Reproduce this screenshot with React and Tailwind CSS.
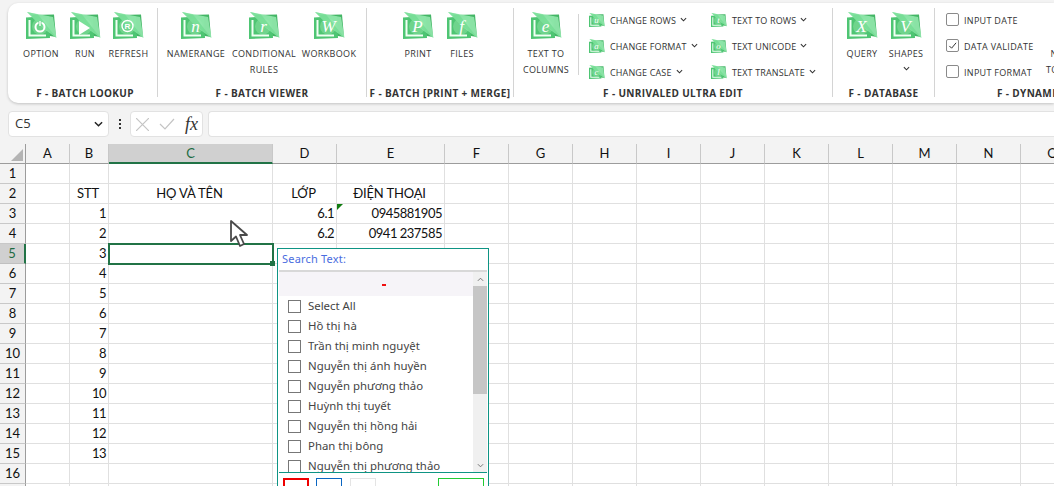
import React from "react";

const ui = { fontFamily: '"Open Sans","Noto Sans",sans-serif' };

function Glyph({ g }) {
  if (g === "power") return <g><circle cx="14" cy="15" r="4.500" fill="none" stroke="#fff" strokeWidth="2" /><path d="M14 9v5" stroke="#6fd48c" strokeWidth="3" /><path d="M14 9v5" stroke="#fff" strokeWidth="1.400" /></g>;
  if (g === "play") return <path d="M9 9l11 7-11 7z" fill="#fff" />;
  if (g === "R") return <g><circle cx="14.500" cy="14" r="5.500" fill="none" stroke="#fff" strokeWidth="1.400" /><text x="14.500" y="17" fontSize="8" fontWeight="700" fill="#fff" textAnchor="middle" fontFamily="Liberation Sans">R</text></g>;
  return <text x="14.500" y="20" fontSize="17" fontStyle="italic" fontFamily="Liberation Serif" fill="#fff" textAnchor="middle">{g}</text>;
}

function BigIcon({ g, small }) {
  return (
    <svg viewBox="0 0 31 27" width={small ? 16 : 31} height={small ? 14 : 27} className="block">
      <path d="M6 3L28 2.500L30 25L12 22z" fill="#43b565" />
      <path d="M0 5.500L23 4L24 26L0 27z" fill="#4ec573" />
      <circle cx="14" cy="14.500" r="8" fill="#6fd48c" />
      <path d="M3.500 8v15.500H20" fill="none" stroke="#f0fff4" strokeWidth="2" />
      <path d="M1 0L27 5L30.500 26L17 16z" fill="#96eab0" opacity=".85" />
      <path d="M1 0L12 2.500L30.500 26L15 14z" fill="#6fdc90" opacity=".7" />
      <Glyph g={g} />
    </svg>
  );
}

function Chevron({ className = "" }) {
  return (
    <svg viewBox="0 0 8 5" width="7" height="5" className={className}>
      <path d="M1 1l3 3 3-3" fill="none" stroke="#333" strokeWidth="1.200" />
    </svg>
  );
}

function Big({ g, w, lines, chevron }) {
  return (
    <div className="flex shrink-0 flex-col items-center" style={{ width: w }}>
      <BigIcon g={g} />
      <div className="mt-[7px] flex flex-col items-center whitespace-nowrap text-[9px] leading-[16px] tracking-[0.35px] text-[#333]">
        {lines.map((l) => <span key={l}>{l}</span>)}
        {chevron && <Chevron className="mt-[4px]" />}
      </div>
    </div>
  );
}

function Small({ g, label }) {
  return (
    <div className="flex h-[26px] items-center whitespace-nowrap text-[9px] tracking-[0.15px] text-[#333]">
      <span className="-mt-[3px] mr-[5px]"><BigIcon g={g} small /></span>
      <span>{label}</span>
      <Chevron className="ml-[4px] -mt-[3px]" />
    </div>
  );
}

function Check({ label, checked }) {
  return (
    <div className="flex h-[26px] items-center whitespace-nowrap text-[9px] tracking-[0.3px] text-[#333]">
      <span className="-mt-[3px] mr-[5px] flex h-[13px] w-[13px] items-center justify-center rounded-[2px] border border-[#8a8a8a] bg-white">
        {checked && <svg viewBox="0 0 10 10" width="9" height="9"><path d="M1.500 5.500l2.500 2.500 5-6" fill="none" stroke="#333" strokeWidth="1.100" /></svg>}
      </span>
      <span>{label}</span>
    </div>
  );
}

function Group({ title, width, pl = 0, border = true, titleClass = "justify-center", children }) {
  return (
    <div className={"flex h-[89px] shrink-0 flex-col " + (border ? "border-r border-[#d4d4d4]" : "")} style={{ width }}>
      <div className="flex h-[81px] shrink-0 overflow-hidden pt-[4px]" style={{ paddingLeft: pl }}>{children}</div>
      <div className={"flex h-[9px] shrink-0 items-center whitespace-nowrap text-[10px] font-bold tracking-[0.35px] text-[#333] " + titleClass}>{title}</div>
    </div>
  );
}

function Ribbon() {
  return (
    <div className="ml-2 flex h-[100px] overflow-hidden rounded-l-[10px] bg-white pt-[5px] shadow-[0_1px_3px_rgba(0,0,0,0.2)]">
      <Group title="F - BATCH LOOKUP" width={150} pl={11} titleClass="justify-center pl-[5px]">
        <Big g="power" w={44} lines={["OPTION"]} />
        <Big g="play" w={44} lines={["RUN"]} />
        <Big g="R" w={43} lines={["REFRESH"]} />
      </Group>
      <Group title="F - BATCH VIEWER" width={209} pl={3}>
        <Big g="n" w={70} lines={["NAMERANGE"]} />
        <Big g="r" w={66} lines={["CONDITIONAL", "RULES"]} />
        <Big g="W" w={64} lines={["WORKBOOK"]} />
      </Group>
      <Group title="F - BATCH [PRINT + MERGE]" width={147} pl={29}>
        <Big g="P" w={44} lines={["PRINT"]} />
        <Big g="f" w={44} lines={["FILES"]} />
      </Group>
      <Group title="F - UNRIVALED ULTRA EDIT" width={319}>
        <div className="w-[65px] shrink-0">
          <div className="relative">
            <Big g="e" w={64} lines={["TEXT TO", "COLUMNS"]} />
            <span className="absolute right-0 top-[2px] h-[61px] w-[1px] bg-[#d4d4d4]" />
          </div>
        </div>
        <div className="-mt-[4px] w-[132px] shrink-0 pl-[10px]">
          <Small g="u" label="CHANGE ROWS" />
          <Small g="a" label="CHANGE FORMAT" />
          <Small g="c" label="CHANGE CASE" />
        </div>
        <div className="-mt-[4px] shrink-0">
          <Small g="t" label="TEXT TO ROWS" />
          <Small g="o" label="TEXT UNICODE" />
          <Small g="l" label="TEXT TRANSLATE" />
        </div>
      </Group>
      <Group title="F - DATABASE" width={102} pl={7}>
        <Big g="X" w={44} lines={["QUERY"]} />
        <Big g="V" w={44} lines={["SHAPES"]} chevron />
      </Group>
      <Group title="F - DYNAMIC ARRAY" width={170} pl={11} border={false} titleClass="pl-[62px]">
        <div className="-mt-[4px] w-[100px] shrink-0">
          <Check label="INPUT DATE" />
          <Check label="DATA VALIDATE" checked />
          <Check label="INPUT FORMAT" />
        </div>
        <div className="mt-[34px] flex flex-col items-center text-[9px] leading-[16px] tracking-[0.35px] text-[#333]">
          <span>NEW</span>
          <span>TOOLS</span>
        </div>
      </Group>
    </div>
  );
}

function FormulaBar() {
  return (
    <div className="mt-[8px] flex h-[26px] pl-2 text-[#333]">
      <div className="flex w-[101px] items-center justify-between rounded-[4px] border border-[#e2e2e2] bg-white pl-[6px] pr-[5px] text-[13px]">
        <span>C5</span>
        <svg viewBox="0 0 10 6" width="9" height="6"><path d="M1 1l4 4 4-4" fill="none" stroke="#222" strokeWidth="1.600" /></svg>
      </div>
      <div className="flex w-[21px] flex-col items-center justify-center gap-[2px]">
        <span className="h-[2px] w-[2px] bg-[#333]" /><span className="h-[2px] w-[2px] bg-[#333]" /><span className="h-[2px] w-[2px] bg-[#333]" />
      </div>
      <div className="flex w-[73px] items-center gap-[10px] rounded-[4px] border border-[#e2e2e2] bg-white pl-[5px]">
        <svg viewBox="0 0 13 13" width="13" height="13"><path d="M0 0l13 13M13 0L0 13" stroke="#c4c4c4" strokeWidth="1.200" /></svg>
        <svg viewBox="0 0 16 12" width="16" height="12"><path d="M1 6l5 5L15 1" fill="none" stroke="#c4c4c4" strokeWidth="1.200" /></svg>
        <span className="text-[18px] italic leading-none text-[#333]" style={{ fontFamily: '"Liberation Serif",serif' }}>fx</span>
      </div>
      <div className="ml-[5px] flex-1 rounded-l-[4px] border border-r-0 border-[#e2e2e2] bg-white" />
    </div>
  );
}

const COLS = ["A", "B", "C", "D", "E", "F", "G", "H", "I", "J", "K", "L", "M", "N", "O"];
const DATA = {
  2: { B: "STT", C: "HỌ VÀ TÊN", D: "LỚP", E: "ĐIỆN THOẠI" },
  3: { D: "6.1", E: "0945881905" },
  4: { D: "6.2", E: "0941 237585" },
};
for (let r = 3; r <= 15; r++) DATA[r] = { ...(DATA[r] || {}), B: String(r - 2) };

function Sheet() {
  const rows = Array.from({ length: 17 }, (_, i) => i + 1);
  return (
    <div className="relative mt-[7px]">
      <div
        className="grid auto-rows-[20px] grid-cols-[26px_44px_39px_164px_64px_108px_repeat(10,64px)] bg-white text-[13px] text-[#111]"
        style={{ fontFamily: 'Lato,"Noto Sans",sans-serif' }}
      >
        <div className="relative border-b border-r border-[#9c9c9c] bg-[#f3f3f3]">
          <svg viewBox="0 0 12 12" width="12" height="12" className="absolute bottom-[2px] right-[2px]"><path d="M12 0v12H0z" fill="#b4b4b4" /></svg>
        </div>
        {COLS.map((c) => (
          <div key={c} className={"flex items-center justify-center border-r border-[#c8c8c8] pt-[1px] " + (c === "C" ? "border-b-2 border-b-[#217346] bg-[#d0d0d0] text-[#1d6b42]" : "border-b border-b-[#9c9c9c] bg-[#f3f3f3]")}>{c}</div>
        ))}
        {rows.map((r) => (
          <React.Fragment key={r}>
            <div className={"flex items-center justify-center border-b border-r pt-[1px] " + (r === 5 ? "border-b-[#c0c0c0] border-r-2 border-r-[#217346] bg-[#d0d0d0] text-[#1d6b42]" : "border-b-[#c8c8c8] border-r-[#9c9c9c] bg-[#f3f3f3]")}>{r}</div>
            {COLS.map((c) => {
              const v = (DATA[r] || {})[c];
              const center = r === 2;
              return (
                <div key={c} className={"relative flex items-center whitespace-nowrap border-b border-r border-[#e0e0e0] pr-[2px] pt-[1px] " + (center ? "justify-center tracking-[-0.15px]" : "justify-end tracking-[-0.5px]")}>
                  {v}
                  {r === 3 && c === "E" && <span className="absolute left-0 top-0 h-0 w-0 border-r-[6px] border-t-[6px] border-r-transparent border-t-[#107c10]" />}
                  {r === 5 && c === "C" && (
                    <span className="absolute -bottom-[2px] -left-[1px] -right-[2px] -top-[1px] z-10 border-2 border-[#217346]">
                      <span className="absolute -bottom-[3px] -right-[3px] h-[5px] w-[5px] bg-[#217346]" />
                    </span>
                  )}
                </div>
              );
            })}
          </React.Fragment>
        ))}
      </div>
      <Popup />
      <svg viewBox="0 0 18 28" width="18" height="28" className="absolute left-[230px] top-[76px] z-30">
        <path d="M1 1v20l5-4.500 4 9.500 4-2-4-9h7z" fill="#fff" stroke="#4a4a4a" strokeWidth="1.800" strokeLinejoin="round" />
      </svg>
    </div>
  );
}

const NAMES = ["Select All", "Hồ thị hà", "Trần thị minh nguyệt", "Nguyễn thị ánh huyền", "Nguyễn phương thảo", "Huỳnh thị tuyết", "Nguyễn thị hồng hải", "Phan thị bông", "Nguyễn thị phương thảo"];

function Popup() {
  return (
    <div className="absolute left-[277px] top-[104px] z-20 flex h-[241px] w-[212px] flex-col border border-[#0e9484] bg-white px-[1px] text-[11.400px] text-[#444]" style={{ fontFamily: '"Noto Sans",sans-serif' }}>
      <div className="flex h-[23px] shrink-0 items-center border-b-2 border-[#d8d8d8] pl-[3px] text-[11px] tracking-[0.2px] text-[#4a6ce0]">Search Text:</div>
      <div className="flex min-h-0 flex-1">
        <div className="min-w-0 flex-1 overflow-hidden">
          <div className="flex h-[24px] items-center justify-center bg-[#f6f4f8] pl-[16px] pt-[1px]"><span className="h-[2px] w-[4px] bg-[#f01010]" /></div>
          {NAMES.map((n) => (
            <div key={n} className="flex h-[20px] items-center whitespace-nowrap pl-[9px]">
              <span className="mr-[7px] h-[13px] w-[13px] shrink-0 border border-[#777] bg-white" />
              {n}
            </div>
          ))}
        </div>
        <div className="flex w-[14px] shrink-0 flex-col bg-[#f0f0f0]">
          <div className="flex h-[14px] items-center justify-center"><svg viewBox="0 0 8 5" width="7" height="5"><path d="M1 4l3-3 3 3" fill="none" stroke="#666" /></svg></div>
          <div className="h-[108px] bg-[#c6c6c6]" />
          <div className="flex-1" />
          <div className="flex h-[14px] items-center justify-center"><svg viewBox="0 0 8 5" width="7" height="5"><path d="M1 1l3 3 3-3" fill="none" stroke="#666" /></svg></div>
        </div>
      </div>
      <div className="flex h-[16px] shrink-0 gap-[7px] overflow-hidden border-t border-[#0e9484] pl-[4px] pt-[5px]">
        <span className="h-[20px] w-[26px] border-2 border-[#ee0000]" />
        <span className="h-[20px] w-[26px] border border-[#0a66c2]" />
        <span className="ml-[1px] h-[20px] w-[26px] border border-[#e4e4e4]" />
        <span className="ml-[55px] h-[20px] w-[46px] border border-[#22cc33]" />
      </div>
    </div>
  );
}

export default function App() {
  return (
    <div className="h-[486px] w-[1054px] overflow-hidden bg-[#f3f3f3] pt-[3px]" style={ui}>
      <Ribbon />
      <FormulaBar />
      <Sheet />
    </div>
  );
}
